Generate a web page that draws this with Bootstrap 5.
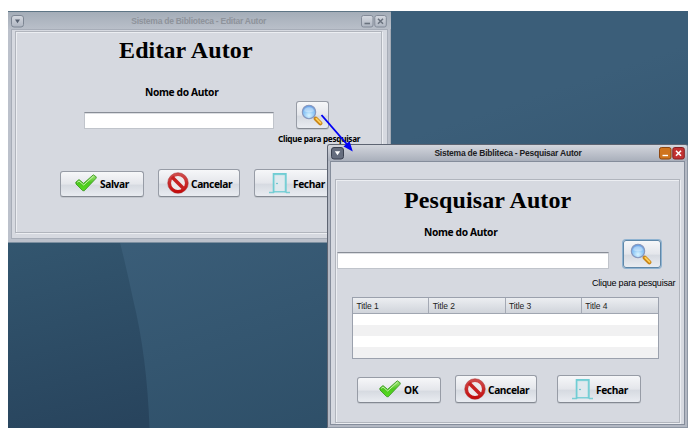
<!DOCTYPE html>
<html lang="pt-BR">
<head>
<meta charset="utf-8">
<meta name="viewport" content="width=device-width, initial-scale=1">
<title>Sistema de Biblioteca</title>
<link href="https://cdn.jsdelivr.net/npm/bootstrap@5.3.0/dist/css/bootstrap.min.css" rel="stylesheet">
<style>
body{background:#fff;font-family:"Liberation Sans",Arial,sans-serif;color:#000;overflow:hidden}
.desk{width:680px;height:417px;margin:11px 0 0 8px;background:#35566f}
.wallpaper{inset:0;width:100%;height:100%}
/* internal frames */
.frame{box-sizing:border-box}
.frame-edit{left:0;top:0;width:382.5px;height:231.5px;background:#bcc1cb;border-top:1px solid #5e7585;border-bottom:1px solid #7c8fa0;padding:0 3px 3px 3px;box-shadow:inset -1px 0 #a4abb5}
.frame-find{left:319px;top:133px;width:361px;height:284px;background:#b3b8c3;border:1px solid #5d6472;border-right-color:#8e97a4;border-bottom-color:#8e97a4;border-radius:3px 3px 0 0;padding:0 2px 2px 2px}
.bar{font-weight:700;font-size:8.5px;white-space:nowrap}
.bar span{padding-left:13px}
.frame-edit .bar{height:17px;margin:0 -3px;padding:1px 4px 0 3px;background:linear-gradient(#a4adb8,#b9bfc9);color:#8e939b;letter-spacing:-.26px}
.frame-find .bar{height:16px;margin:0 -2px;padding:1px 2px 0 3px;background:linear-gradient(#d3d6dd,#a9afbb);color:#1c1c22;border-radius:2px 2px 0 0;letter-spacing:-.22px}
.sq{width:13px;height:13px;flex:none}
.client{background:#d6d9e0;border:1px solid #a7adb8}
.frame-edit .client{height:210px;padding:1px 5px 5px 3px}
.frame-find .client{height:264px;border-color:#858d9b;padding:17px 4px 1px 4px}
.panel{border:1px solid #b1b5bd;box-shadow:inset 1px 1px #eceef2,1px 1px #eceef2;height:100%}
h1{font:700 24px/30px "Liberation Serif","Times New Roman",serif;letter-spacing:.12px;margin:0;white-space:nowrap}
.lbl{font:700 10.2px/16px "Noto Sans",sans-serif;letter-spacing:-.34px;white-space:nowrap}
.hint{font:700 8.2px/14px "Noto Sans",sans-serif;letter-spacing:-.28px;white-space:nowrap}
.hint-plain{font:400 9px/12px "Liberation Sans",Arial,sans-serif;letter-spacing:-.2px;white-space:nowrap}
.field{height:17px;padding:0;border:1px solid #c0c4cb;border-top-color:#888d96;border-radius:0;box-shadow:inset 0 1px #dcdee2;background:#fff}
.key{padding:0;border:1px solid #979ca6;border-bottom-color:#848992;border-radius:3px;background:linear-gradient(#f6f7f9,#e4e6eb 50%,#d6dae1 55%,#e9ecf1);font:700 10.2px/16px "Noto Sans",sans-serif;letter-spacing:-.4px;color:#000;box-shadow:0 1px #c2c6cd;white-space:nowrap}
.key svg,.key span{flex:none}
.key:hover{color:#000}
.key span{margin:1px 0 0 2px}
.key-check{width:84px;height:26px;margin-top:1px;padding:0 0 2px 14px}
.key-ok{padding-left:21px}
.key-check span{margin:2px 0 0 3px}
.key-stop{width:82px;height:28px;padding:0 0 0 8px}
.key-door{width:84px;height:28px;padding:0 0 0 14px}
.key-lens{width:33px;height:28px;padding:2px 0 0 4px}
.key-focus{width:38px;height:28px;padding:2px 0 0 6px;border-color:#5f87a8;box-shadow:0 0 0 1px #8fb3d1}
.grid-view{width:307px;height:62px;border:1px solid #9ba1ad;font-size:8.5px;letter-spacing:-.1px}
.grid-head{height:16px;background:linear-gradient(#eceef1,#d0d4db);border-bottom:1px solid #a0a6b1;color:#222}
.grid-head div{width:76.3px;padding-left:3.5px;line-height:16px;border-right:1px solid #a4a9b4}
.grid-head div:last-child{border-right:0}
.stripe{height:11px;background:#fff}
.stripe:nth-child(odd){background:#f1f1f2}
/* edit form */
.e-head{margin:3px 0 0 103px}
.e-lbl{margin:19px 0 0 129px}
.e-row{margin-left:68px;height:29px;gap:22px}
.e-row .field{width:190px}
.e-hint{margin:3px 0 0 262px}
.e-keys{margin:23px 0 0 44px;gap:14px}
/* search form */
.f-head{margin:5px 0 0 68px}
.f-lbl{margin:9px 0 0 88px}
.f-row{height:29px;gap:14px;margin-left:1px}
.f-row .field{width:272px;margin-top:12px}
.f-hint{margin:8px 0 0 256px}
.f-grid{margin:8px 0 0 16px}
.f-keys{margin:16px 0 0 21px}
.f-keys .key-stop{margin-left:14px}
.f-keys .key-door{margin-left:20px}
.overlay-arrow{left:310px;top:100px;width:40px;height:44px}
</style>
<script src="https://cdn.jsdelivr.net/npm/bootstrap@5.3.0/dist/js/bootstrap.bundle.min.js"></script>
</head>
<body>
<svg width="0" height="0" class="position-absolute">
  <defs>
    <linearGradient id="gGreen" x1="0" y1="0" x2="0" y2="1"><stop offset="0" stop-color="#a5e57c"/><stop offset=".5" stop-color="#4cc81e"/><stop offset="1" stop-color="#57dc1e"/></linearGradient>
    <radialGradient id="gLens" cx=".5" cy=".75" r=".8"><stop offset="0" stop-color="#d9f4ff"/><stop offset=".5" stop-color="#8cc6f6"/><stop offset="1" stop-color="#5d93e0"/></radialGradient>
    <linearGradient id="gRed" x1="0" y1="0" x2="0" y2="1"><stop offset="0" stop-color="#cf4a4a"/><stop offset="1" stop-color="#c40d0d"/></linearGradient>
    <linearGradient id="gTile" x1="0" y1="0" x2="0" y2="1"><stop offset="0" stop-color="#d5d9e0"/><stop offset="1" stop-color="#aeb5c1"/></linearGradient>
    <symbol id="ok" viewBox="0 0 22 18"><path d="M.8 8.200 4 5.600 8.600 9.400 18.300.8 21.300 2.900 20.800 4.600 9.200 16.800 7.600 16.600 1 10Z" fill="url(#gGreen)" stroke="#3c9a22" stroke-width=".9" stroke-linejoin="round"/><path d="M2.300 8.400 4 7l4.700 4L18.500 2.200" fill="none" stroke="#d2f5bb" stroke-width=".9"/></symbol>
    <symbol id="no" viewBox="0 0 22 22"><circle cx="11" cy="11" r="8.600" fill="#eceaec" stroke="url(#gRed)" stroke-width="3.300"/><path d="M5 5 17 17" stroke="#c62020" stroke-width="3.500"/><circle cx="11" cy="11" r="10.300" fill="none" stroke="#a92828" stroke-width=".5"/></symbol>
    <symbol id="door" viewBox="0 0 22 22"><path d="M0 20.500H5M17 20.500H21" stroke="#7bcdd3" stroke-width="1.300"/><path d="M4.700 20.500V1.900H16.700V20.500" fill="none" stroke="#70cdd4" stroke-width="2"/><path d="M5.600 3V19.500H15.800V3Z" fill="#dfe9ee" stroke="#a5dce1" stroke-width=".5"/><path d="M4.500 19.800H17" stroke="#70cdd4" stroke-width="1.300"/><circle cx="8" cy="11.500" r=".8" fill="#49b9c4"/></symbol>
    <symbol id="lens" viewBox="0 0 22 22"><path d="M13 13 15.500 15.500" stroke="#9aa4b5" stroke-width="2.200"/><path d="M14.800 14.800 19.300 19.300" stroke="#c98516" stroke-width="4.200" stroke-linecap="round"/><path d="M15.300 14.600 19.600 18.800" stroke="#ffd15a" stroke-width="1.800" stroke-linecap="round"/><circle cx="8" cy="8" r="6.700" fill="url(#gLens)" stroke="#8797bd" stroke-width="1.100"/><path d="M3 7.200Q3.600 3.300 8 3.200T13 7.200Q8 9.500 3 7.200Z" fill="#fff" opacity=".35"/></symbol>
  </defs>
</svg>

<main class="desk position-relative overflow-hidden">
  <svg class="wallpaper position-absolute" viewBox="0 0 680 417" preserveAspectRatio="none">
    <defs>
      <linearGradient id="bgA" gradientUnits="userSpaceOnUse" x1="180" y1="200" x2="260" y2="440"><stop offset="0" stop-color="#3b5e79"/><stop offset="1" stop-color="#2e4f68"/></linearGradient>
      <linearGradient id="bgB" gradientUnits="userSpaceOnUse" x1="40" y1="220" x2="90" y2="420"><stop offset="0" stop-color="#33566f"/><stop offset="1" stop-color="#28445d"/></linearGradient>
    </defs>
    <path d="M0 0H680V417H0Z" fill="url(#bgA)"/>
    <path d="M0 200H103Q113 231 125 288 139 345 141.500 417H0Z" fill="url(#bgB)"/>
  </svg>

  <section class="frame frame-edit position-absolute">
    <header class="bar d-flex align-items-center">
      <svg class="sq" viewBox="0 0 13 13"><rect x=".5" y=".5" width="12" height="11.500" rx="2.500" fill="url(#gTile)" stroke="#7e8794"/><path d="M4 4.500H9L6.500 8.300Z" fill="#566070"/></svg>
      <span class="flex-grow-1 text-center">Sistema de Biblioteca - Editar Autor</span>
      <svg class="sq" viewBox="0 0 13 13"><rect x=".5" y=".5" width="11.500" height="11.500" rx="2" fill="url(#gTile)" stroke="#838b98"/><path d="M3.500 8.500H9" stroke="#6a727e" stroke-width="1.600"/></svg>
      <svg class="sq" viewBox="0 0 13 13"><rect x=".8" y=".5" width="11.500" height="11.500" rx="2" fill="url(#gTile)" stroke="#838b98"/><path d="M4 3.700 9 8.700M9 3.700 4 8.700" stroke="#6a727e" stroke-width="1.500"/></svg>
    </header>
    <div class="client">
      <div class="panel overflow-hidden">
        <h1 class="e-head">Editar Autor</h1>
        <div class="lbl e-lbl">Nome do Autor</div>
        <div class="e-row d-flex align-items-end">
          <input class="field form-control" type="text" aria-label="Nome do Autor">
          <button class="key key-lens btn d-flex align-items-start" aria-label="Pesquisar"><svg width="22" height="22"><use href="#lens"/></svg></button>
        </div>
        <div class="hint e-hint">Clique para pesquisar</div>
        <div class="e-keys d-flex align-items-center">
          <button class="key key-check btn d-flex align-items-center"><svg width="22" height="18"><use href="#ok"/></svg><span>Salvar</span></button>
          <button class="key key-stop btn d-flex align-items-center"><svg width="22" height="22"><use href="#no"/></svg><span>Cancelar</span></button>
          <button class="key key-door btn d-flex align-items-center"><svg width="22" height="22"><use href="#door"/></svg><span>Fechar</span></button>
        </div>
      </div>
    </div>
  </section>

  <section class="frame frame-find position-absolute">
    <header class="bar d-flex align-items-center">
      <svg class="sq" viewBox="0 0 13 13"><rect x=".5" y=".5" width="12" height="11.500" rx="2.500" fill="#656d7e" stroke="#3a4150"/><path d="M3.800 4.300H9.200L6.500 8.300Z" fill="#fff"/></svg>
      <span class="flex-grow-1 text-center">Sistema de Bibliteca - Pesquisar Autor</span>
      <svg class="sq" viewBox="0 0 13 13"><rect x=".5" y=".5" width="11.500" height="11.500" rx="2" fill="#cf741d" stroke="#8d4710"/><path d="M3.500 8.500H9" stroke="#fff" stroke-width="1.400"/></svg>
      <svg class="sq" viewBox="0 0 13 13"><rect x=".8" y=".5" width="11.500" height="11.500" rx="2" fill="#c23232" stroke="#852020"/><path d="M4 3.700 9 8.700M9 3.700 4 8.700" stroke="#fff" stroke-width="1.600"/></svg>
    </header>
    <div class="client">
      <div class="panel overflow-hidden">
        <h1 class="f-head">Pesquisar Autor</h1>
        <div class="lbl f-lbl">Nome do Autor</div>
        <div class="f-row d-flex align-items-start">
          <input class="field form-control" type="text" aria-label="Nome do Autor">
          <button class="key key-focus btn d-flex align-items-start" aria-label="Pesquisar"><svg width="22" height="22"><use href="#lens"/></svg></button>
        </div>
        <div class="hint-plain f-hint">Clique para pesquisar</div>
        <div class="grid-view f-grid">
          <div class="grid-head d-flex"><div>Title 1</div><div>Title 2</div><div>Title 3</div><div>Title 4</div></div>
          <div class="stripe"></div><div class="stripe"></div><div class="stripe"></div><div class="stripe"></div>
        </div>
        <div class="f-keys d-flex align-items-center">
          <button class="key key-check key-ok btn d-flex align-items-center"><svg width="22" height="18"><use href="#ok"/></svg><span>OK</span></button>
          <button class="key key-stop btn d-flex align-items-center"><svg width="22" height="22"><use href="#no"/></svg><span>Cancelar</span></button>
          <button class="key key-door btn d-flex align-items-center"><svg width="22" height="22"><use href="#door"/></svg><span>Fechar</span></button>
        </div>
      </div>
    </div>
  </section>

  <svg class="overlay-arrow position-absolute" viewBox="0 0 40 44"><path d="M3.500 4 30 34.500" stroke="#0000f5" stroke-width="1.900"/><path d="M34.800 40.500 25.500 35.500 31.500 30Z" fill="#0000f5"/></svg>
</main>
</body>
</html>
